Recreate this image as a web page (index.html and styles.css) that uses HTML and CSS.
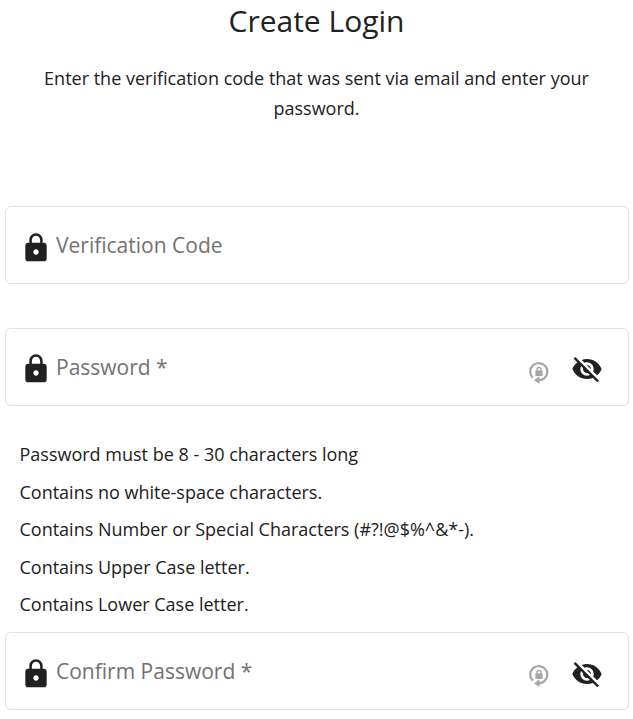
FILE: index.html
```html
<!DOCTYPE html>
<html lang="en">
<head>
<meta charset="utf-8">
<title>Create Login</title>
<link rel="stylesheet" href="styles.css">
</head>
<body>
<svg class="defs" width="0" height="0">
  <symbol id="lock" viewBox="0 0 24 24"><path d="M18 8h-1V6c0-2.760-2.240-5-5-5S7 3.240 7 6v2H6c-1.100 0-2 .9-2 2v10c0 1.100.9 2 2 2h12c1.100 0 2-.9 2-2V10c0-1.100-.9-2-2-2zm-6 9c-1.100 0-2-.9-2-2s.9-2 2-2 2 .9 2 2-.9 2-2 2zm3.100-9H8.900V6c0-1.710 1.390-3.100 3.100-3.100 1.710 0 3.100 1.390 3.100 3.100v2z"/></symbol>
  <symbol id="eye-off" viewBox="0 0 24 24"><path d="M12 7c2.760 0 5 2.240 5 5 0 .65-.13 1.260-.36 1.830l2.920 2.920c1.510-1.260 2.700-2.890 3.430-4.750-1.730-4.390-6-7.500-11-7.500-1.400 0-2.740.25-3.980.7l2.160 2.160C10.740 7.130 11.350 7 12 7zM2 4.270l2.280 2.280.46.46C3.080 8.300 1.780 10.020 1 12c1.730 4.390 6 7.500 11 7.500 1.550 0 3.030-.3 4.380-.84l.42.42L19.730 22 21 20.730 3.270 3 2 4.270zM7.530 9.800l1.550 1.550c-.05.21-.08.43-.08.65 0 1.660 1.340 3 3 3 .22 0 .44-.03.65-.08l1.550 1.550c-.67.33-1.410.53-2.200.53-2.760 0-5-2.240-5-5 0-.79.2-1.530.53-2.200zm4.310-.78l3.150 3.150.02-.16c0-1.660-1.340-3-3-3l-.17.01z"/></symbol>
  <symbol id="generate" viewBox="0 0 22 24"><path fill="none" stroke="currentColor" stroke-width="2.200" d="M4.700 16.700A8.600 8.600 0 1 1 16.200 17.300Q14 19.200 10 19.200"/><path d="M11.500 15.300v7.700L6 19.200z"/><path d="M7.400 9.400h7.200v5.600H7.400z"/><path fill="none" stroke="currentColor" stroke-width="1.300" d="M9 10V8.500a2 2 0 0 1 4 0V10"/></symbol>
</svg>
<main class="page">
  <h1 class="title">Create Login</h1>
  <p class="intro">Enter the verification code that was sent via email and enter your password.</p>
  <form class="form">
    <div class="field field-code">
      <svg class="lock"><use href="#lock"/></svg>
      <span class="label">Verification Code</span>
    </div>
    <div class="field field-password">
      <svg class="lock"><use href="#lock"/></svg>
      <span class="label">Password *</span>
      <svg class="generate"><use href="#generate"/></svg>
      <svg class="eye"><use href="#eye-off"/></svg>
    </div>
    <ul class="rules">
      <li>Password must be 8 - 30 characters long</li>
      <li>Contains no white-space characters.</li>
      <li>Contains Number or Special Characters (#?!@$%^&amp;*-).</li>
      <li>Contains Upper Case letter.</li>
      <li>Contains Lower Case letter.</li>
    </ul>
    <div class="field field-confirm">
      <svg class="lock"><use href="#lock"/></svg>
      <span class="label">Confirm Password *</span>
      <svg class="generate"><use href="#generate"/></svg>
      <svg class="eye"><use href="#eye-off"/></svg>
    </div>
  </form>
</main>
</body>
</html>
```
FILE: styles.css
```css
* { box-sizing: border-box; }
body { margin: 0; background: #fff; color: #212121; font-family: "Open Sans", sans-serif; }
.defs { display: none; }
.page { padding: 0 4px 0 5px; }
.title { margin: 0 1px 0 0; height: 44px; line-height: 42px; font-size: 30px; font-weight: 400; text-align: center; }
.intro { margin: 19px 31px 0 30px; font-size: 18px; line-height: 30px; text-align: center; }
.form { padding-top: 83px; }
.field { display: flex; align-items: center; height: 78px; padding: 0 25px 0 14px; border: 1px solid #e0e0e0; border-radius: 6px; }
.field-password { margin-top: 44px; }
.field svg { flex: none; fill: currentColor; }
.lock { width: 32px; height: 32px; margin-top: 4px; }
.field-code .lock, .field-confirm .lock { margin-top: 6px; }
.label { flex: 1; margin-left: 4px; font-size: 21px; line-height: 30px; color: #727272; }
.generate { width: 22px; height: 24px; margin: 11px 21px 0 0; color: #a6a6a6; }
.eye { width: 32px; height: 32px; margin-top: 4px; }
.field-confirm .eye { margin-top: 6px; }
.rules { list-style: none; margin: 30px 0 8px; padding: 0 15px 0 14.500px; font-size: 18px; line-height: 37.500px; }
```
